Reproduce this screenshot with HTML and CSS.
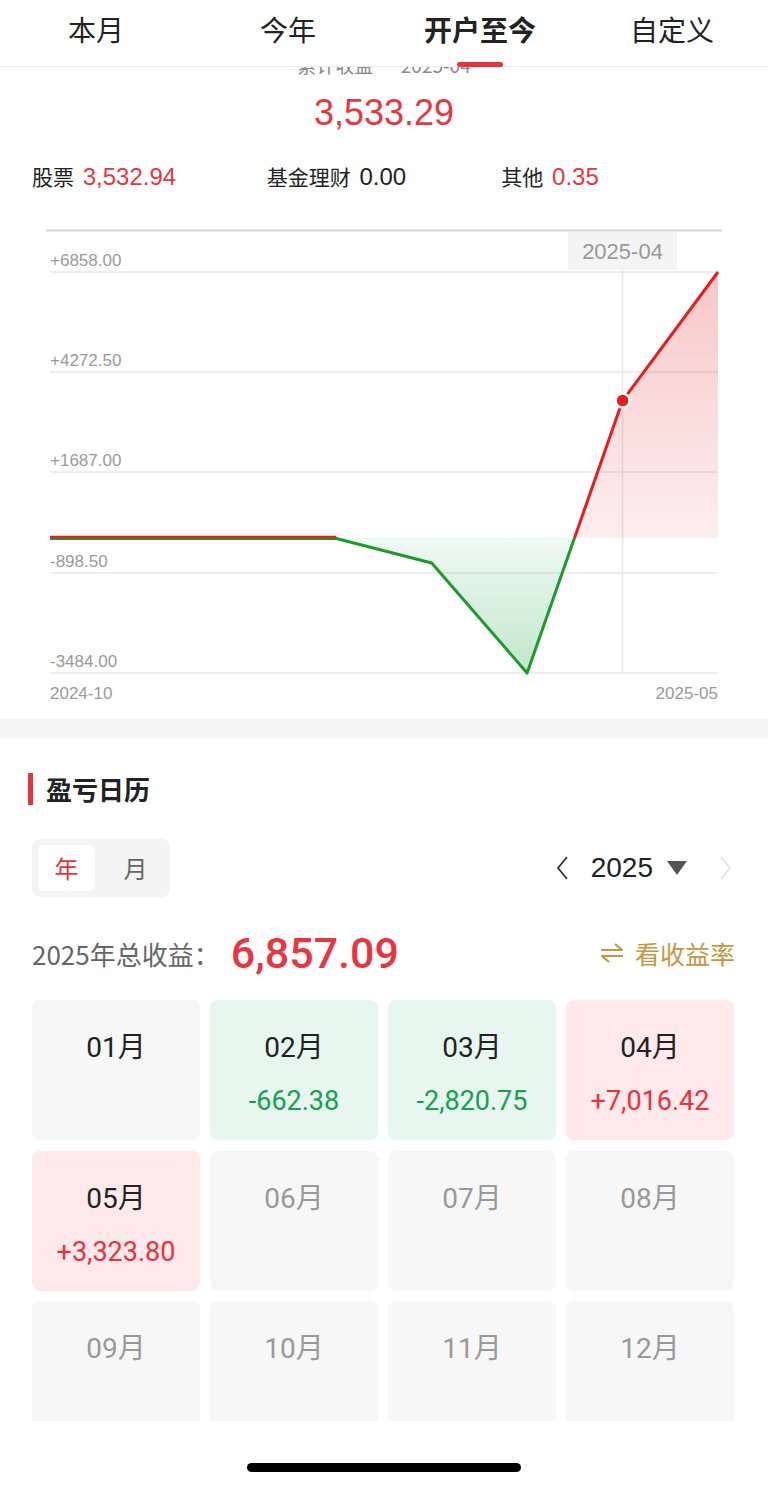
FILE: index.html
```html
<!DOCTYPE html>
<html lang="zh-CN">
<head>
  <meta charset="UTF-8" />
  <meta name="viewport" content="width=device-width, initial-scale=1" />
  <title>收益分析</title>
  <link rel="stylesheet" href="styles.css">
</head>
<body>
  <div class="tabs">
    <div class="tab">本月</div>
    <div class="tab">今年</div>
    <div class="tab active">开户至今</div>
    <div class="tab">自定义</div>
  </div>

  <div class="summary">
    <div class="summary-title">累计收益 · 2025-04</div>
    <div class="summary-amount">3,533.29</div>
    <div class="breakdown">
      <div class="bd-item">股票 <span class="up">3,532.94</span></div>
      <div class="bd-item">基金理财 <span>0.00</span></div>
      <div class="bd-item">其他 <span class="up">0.35</span></div>
    </div>
  </div>

  <svg class="chart" width="768" height="493" viewBox="0 225 768 493">
    <defs>
      <linearGradient id="redFill" x1="0" y1="271" x2="0" y2="537" gradientUnits="userSpaceOnUse">
        <stop offset="0" stop-color="#e02a2a" stop-opacity="0.26" />
        <stop offset="1" stop-color="#e02a2a" stop-opacity="0.08" />
      </linearGradient>
      <linearGradient id="greenFill" x1="0" y1="537" x2="0" y2="672" gradientUnits="userSpaceOnUse">
        <stop offset="0" stop-color="#22a845" stop-opacity="0.07" />
        <stop offset="1" stop-color="#22a845" stop-opacity="0.28" />
      </linearGradient>
    </defs>

    <line x1="46" y1="229.5" x2="722" y2="229.5" stroke="#d8d8d8" stroke-width="2" />
    <rect x="568" y="231" width="109" height="38" fill="#f4f4f4" />
    <text class="tip" x="622.5" y="258" text-anchor="middle">2025-04</text>

    <g stroke="#e9e9e9" stroke-width="1.5">
      <line x1="50" y1="271" x2="718" y2="271" />
      <line x1="50" y1="371" x2="718" y2="371" />
      <line x1="50" y1="471" x2="718" y2="471" />
      <line x1="50" y1="572" x2="718" y2="572" />
      <line x1="50" y1="672" x2="718" y2="672" />
      <line x1="622.6" y1="269" x2="622.6" y2="672" />
    </g>

    <g class="axis">
      <text x="50" y="265">+6858.00</text>
      <text x="50" y="365">+4272.50</text>
      <text x="50" y="465">+1687.00</text>
      <text x="50" y="566">-898.50</text>
      <text x="50" y="666">-3484.00</text>
      <text x="50" y="698">2024-10</text>
      <text x="718" y="698" text-anchor="end">2025-05</text>
    </g>

    <polygon points="574.5,537 622.6,399.6 718,271 718,537" fill="url(#redFill)" />
    <polygon points="336.3,537 431.7,562 527.1,672 574.5,537" fill="url(#greenFill)" />

    <polyline points="50,537.5 336.3,537.5 431.7,562 527.1,672 574.5,537" fill="none" stroke="#1c9a2c" stroke-width="3" stroke-linejoin="round" />
    <polyline points="50,536 336.3,536" fill="none" stroke="#e21f1f" stroke-width="2.5" />
    <polyline points="574.5,537 622.6,399.6 718,271" fill="none" stroke="#e21f1f" stroke-width="3" stroke-linejoin="round" />

    <circle cx="622.6" cy="399.6" r="8.5" fill="#000" opacity="0.08" />
    <circle cx="622.6" cy="399.6" r="7" fill="#e21f1f" stroke="#fff" stroke-width="2.5" />
  </svg>

  <div class="divider"></div>

  <div class="calendar">
    <div class="section-title">盈亏日历</div>

    <div class="controls">
      <div class="segment">
        <div class="seg-btn selected">年</div>
        <div class="seg-btn">月</div>
      </div>
      <div class="year-nav">
        <svg class="chev" width="14" height="26" viewBox="0 0 14 26"><polyline points="12,2 3,13 12,24" fill="none" stroke="#333" stroke-width="1.8" /></svg>
        <span class="year">2025</span>
        <svg class="tri" width="20" height="14" viewBox="0 0 20 14"><polygon points="0,0 20,0 10,14" fill="#555" /></svg>
        <svg class="chev" width="14" height="26" viewBox="0 0 14 26"><polyline points="2,2 11,13 2,24" fill="none" stroke="#e2e2e2" stroke-width="1.8" /></svg>
      </div>
    </div>

    <div class="total-row">
      <div class="total">
        <span class="total-label">2025年总收益：</span>
        <span class="total-value">6,857.09</span>
      </div>
      <div class="switch">
        <svg width="26" height="22" viewBox="0 0 26 22">
          <polyline points="2,8 23,8 16,2" fill="none" stroke="#c8963e" stroke-width="2.2" stroke-linejoin="round" />
          <polyline points="24,14 3,14 10,20" fill="none" stroke="#c8963e" stroke-width="2.2" stroke-linejoin="round" />
        </svg>
        看收益率
      </div>
    </div>

    <div class="months-wrap">
      <div class="months">
        <div class="cell"><div class="m">01月</div></div>
        <div class="cell loss"><div class="m">02月</div><div class="v">-662.38</div></div>
        <div class="cell loss"><div class="m">03月</div><div class="v">-2,820.75</div></div>
        <div class="cell gain"><div class="m">04月</div><div class="v">+7,016.42</div></div>
        <div class="cell gain"><div class="m">05月</div><div class="v">+3,323.80</div></div>
        <div class="cell future"><div class="m">06月</div></div>
        <div class="cell future"><div class="m">07月</div></div>
        <div class="cell future"><div class="m">08月</div></div>
        <div class="cell future"><div class="m">09月</div></div>
        <div class="cell future"><div class="m">10月</div></div>
        <div class="cell future"><div class="m">11月</div></div>
        <div class="cell future"><div class="m">12月</div></div>
      </div>
    </div>
  </div>

  <div class="home-bar"></div>
</body>
</html>
```

FILE: styles.css
```css
html, body {
  margin: 0;
  padding: 0;
  background: #fff;
  font-family: "Liberation Sans", "Noto Sans CJK SC", sans-serif;
  color: #222;
  overflow: hidden;
}
.tabs {
  position: relative;
  z-index: 2;
  display: grid;
  grid-template-columns: repeat(4, 1fr);
  height: 66px;
  background: #fff;
  border-bottom: 1px solid #ededed;
}
.tab {
  text-align: center;
  font-family: "Noto Sans CJK SC", sans-serif;
  font-size: 28px;
  line-height: 58px;
  color: #222;
  position: relative;
}
.tab.active {
  font-weight: bold;
}
.tab.active::after {
  content: "";
  position: absolute;
  left: 50%;
  bottom: -1px;
  width: 46px;
  height: 5px;
  margin-left: -23px;
  border-radius: 3px;
  background: #e8333c;
}
.summary {
  text-align: center;
}
.summary-title {
  margin-top: -13px;
  line-height: 22px;
  font-size: 19px;
  color: #888;
  font-family: "Noto Sans CJK SC", sans-serif;
}
.summary-amount {
  margin-top: 15px;
  line-height: 44px;
  font-size: 36px;
  color: #e8363f;
}
.breakdown {
  display: grid;
  grid-template-columns: repeat(3, 1fr);
  padding: 0 32px;
  margin-top: 26px;
  text-align: left;
  line-height: 30px;
  font-size: 21px;
  color: #222;
}
.bd-item {
  font-family: "Noto Sans CJK SC", sans-serif;
}
.bd-item span {
  font-family: "Liberation Sans", sans-serif;
  font-size: 24px;
  margin-left: 4px;
}
.bd-item .up {
  color: #e8363f;
}
.chart {
  display: block;
  margin-top: 34px;
}
.chart .tip {
  font-size: 22px;
  fill: #999;
}
.chart .axis text {
  font-size: 17px;
  fill: #9a9a9a;
}
.divider {
  height: 20px;
  background: #f5f5f5;
}
.calendar {
  font-family: "Noto Sans CJK SC", sans-serif;
}
.section-title {
  margin: 34px 0 0 28px;
  padding-left: 13px;
  border-left: 5px solid #e8333c;
  line-height: 32px;
  font-size: 26px;
  font-weight: bold;
  color: #222;
}
.controls {
  display: flex;
  justify-content: space-between;
  align-items: center;
  margin-top: 34px;
  padding: 0 35px 0 32px;
}
.segment {
  display: flex;
  gap: 12px;
  width: 138px;
  height: 58px;
  padding: 6px;
  box-sizing: border-box;
  background: #f4f4f4;
  border-radius: 8px;
}
.seg-btn {
  width: 57px;
  text-align: center;
  line-height: 46px;
  font-size: 24px;
  color: #666;
  border-radius: 6px;
}
.seg-btn.selected {
  background: #fff;
  color: #e8333c;
}
.year-nav {
  display: flex;
  align-items: center;
}
.year {
  margin: 0 14px 0 22px;
  font-family: "Liberation Sans", sans-serif;
  font-size: 28px;
  color: #222;
}
.tri {
  margin-right: 32px;
}
.total-row {
  display: flex;
  justify-content: space-between;
  align-items: center;
  margin-top: 32px;
  padding: 0 33px 0 32px;
  height: 48px;
}
.total {
  display: flex;
  align-items: center;
}
.total-label {
  font-size: 26px;
  color: #666;
}
.total-value {
  margin-left: 11px;
  font-family: Roboto, sans-serif;
  font-weight: 500;
  font-size: 43px;
  color: #e8363f;
}
.switch {
  display: flex;
  align-items: center;
  gap: 10px;
  font-size: 25px;
  color: #c8963e;
}
.months-wrap {
  margin-top: 23px;
  height: 421px;
  overflow: hidden;
}
.months {
  display: grid;
  grid-template-columns: repeat(4, 1fr);
  column-gap: 10px;
  row-gap: 10.5px;
  padding: 0 34px 0 32px;
}
.cell {
  height: 140px;
  border-radius: 8px;
  background: #f7f7f7;
  text-align: center;
  font-family: Roboto, "Noto Sans CJK SC", sans-serif;
}
.cell .m {
  padding-top: 32px;
  line-height: 32px;
  font-size: 28px;
  color: #222;
}
.cell .v {
  margin-top: 22px;
  line-height: 30px;
  font-size: 27px;
}
.cell.loss {
  background: #e7f6ef;
}
.cell.loss .v {
  color: #16a052;
}
.cell.gain {
  background: #ffe9ea;
}
.cell.gain .v {
  color: #e8333c;
}
.cell.future .m {
  color: #999;
}
.home-bar {
  width: 274px;
  height: 9px;
  margin: 42px auto 0;
  border-radius: 5px;
  background: #000;
}
```
